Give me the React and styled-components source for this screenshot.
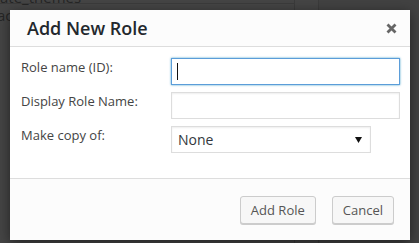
import React from 'react';
import styled, { createGlobalStyle } from 'styled-components';

const GlobalStyle = createGlobalStyle`
  html, body {
    margin: 0;
    padding: 0;
    background: #444;
  }
  * { box-sizing: border-box; }
`;

const Screen = styled.div`
  position: relative;
  width: 419px;
  height: 243px;
  overflow: hidden;
  background: #444;
  font-family: "Open Sans", "Noto Sans", sans-serif;
`;

// the admin table that sits behind the modal backdrop
const Underlay = styled.div`
  display: grid;
  grid-template-columns: 295px 24px 1fr;
  height: 100%;
`;

const UnderCol = styled.div`
  border-right: ${(p) => (p.$last ? 'none' : '1px solid #3b3b3b')};
  background: ${(p) => (p.$last ? '#424242' : '#454545')};
  overflow: hidden;
`;

const UnderRow = styled.div`
  height: ${(p) => p.$h}px;
  border-bottom: ${(p) => (p.$line ? '1px solid #3b3b3b' : 'none')};
  color: #262626;
  font-size: 15px;
  line-height: ${(p) => p.$h}px;
  white-space: nowrap;
  margin-left: ${(p) => p.$indent || 0}px;
`;

const Dialog = styled.div`
  position: absolute;
  top: 10px;
  left: 10px;
  width: 400px;
  height: 230px;
  display: flex;
  flex-direction: column;
  background: #fff;
  box-shadow: 0 3px 12px rgba(0, 0, 0, 0.5);
`;

const Header = styled.div`
  height: 37px;
  display: flex;
  align-items: center;
  justify-content: space-between;
  padding: 0 13px 0 17px;
  background: #fcfcfc;
  border-bottom: 1px solid #ddd;
`;

const Title = styled.h1`
  margin: 0;
  font-size: 18px;
  font-weight: 600;
  color: #23282d;
  line-height: 24px;
`;

const CloseButton = styled.button`
  border: 0;
  padding: 0;
  background: none;
  width: 11px;
  height: 11px;
  display: flex;
  cursor: pointer;
`;

const Body = styled.div`
  flex: 1;
  display: flex;
  flex-direction: column;
  gap: 7px;
  padding: 11px 10px 0 11px;
`;

const Row = styled.div`
  display: flex;
  align-items: flex-start;
`;

const Label = styled.label`
  width: 150px;
  flex-shrink: 0;
  font-size: 13px;
  line-height: 18px;
  color: #444;
`;

const InputWrap = styled.div`
  position: relative;
  display: flex;
`;

const TextInput = styled.input`
  width: 229px;
  height: 27px;
  margin: 0;
  padding: 0 6px;
  border: 1px solid ${(p) => (p.$focused ? '#5b9dd9' : '#ddd')};
  box-shadow: ${(p) =>
    p.$focused ? '0 0 2px rgba(30, 140, 190, 0.8)' : 'inset 0 1px 2px rgba(0, 0, 0, 0.07)'};
  background: #fff;
  font-family: inherit;
  font-size: 14px;
  color: #32373c;
  outline: none;
  caret-color: transparent;
`;

// text cursor shown in the focused field
const Caret = styled.span`
  position: absolute;
  left: 6px;
  top: 5px;
  width: 1px;
  height: 17px;
  background: #111;
  pointer-events: none;
`;

const SelectWrap = styled.div`
  position: relative;
  width: 200px;
  height: 27px;
`;

const Select = styled.select`
  appearance: none;
  width: 100%;
  height: 100%;
  margin: 0;
  padding: 0 20px 0 6px;
  border: 1px solid #ddd;
  border-radius: 0;
  box-shadow: inset 0 1px 2px rgba(0, 0, 0, 0.07);
  background: #fff;
  font-family: inherit;
  font-size: 14px;
  color: #32373c;
  outline: none;
`;

const Arrow = styled.svg`
  position: absolute;
  right: 9px;
  top: 11px;
  pointer-events: none;
`;

const Footer = styled.div`
  height: 62px;
  display: flex;
  align-items: flex-start;
  justify-content: flex-end;
  gap: 16px;
  padding: 17px 16px 0 0;
  background: #fcfcfc;
  border-top: 1px solid #ddd;
`;

const Button = styled.button`
  height: 28px;
  padding: 0 10px;
  border: 1px solid #ccc;
  border-radius: 3px;
  background: #f7f7f7;
  box-shadow: 0 1px 0 #ccc;
  font-family: inherit;
  font-size: 13px;
  color: #555;
  line-height: 26px;
  cursor: pointer;
`;

const fields = [
  { id: 'role-id', label: 'Role name (ID):', focused: true },
  { id: 'role-name', label: 'Display Role Name:' },
];

export default function App() {
  return (
    <Screen>
      <GlobalStyle />
      <Underlay>
        <UnderCol>
          <UnderRow $h={14} $line style={{ marginTop: -10 }}>
            ate_themes
          </UnderRow>
          <UnderRow $h={22} $indent={-3}>ac</UnderRow>
        </UnderCol>
        <UnderCol />
        <UnderCol $last />
      </Underlay>

      <Dialog role="dialog">
        <Header>
          <Title>Add New Role</Title>
          <CloseButton aria-label="Close">
            <svg width="11" height="11" viewBox="0 0 11 11">
              <path d="M1.5 1.5 L9.5 9.5 M9.5 1.5 L1.5 9.5" stroke="#666" strokeWidth="2.8" />
            </svg>
          </CloseButton>
        </Header>

        <Body>
          {fields.map((f) => (
            <Row key={f.id}>
              <Label htmlFor={f.id}>{f.label}</Label>
              <InputWrap>
                <TextInput id={f.id} type="text" $focused={f.focused} />
                {f.focused && <Caret />}
              </InputWrap>
            </Row>
          ))}
          <Row>
            <Label htmlFor="copy-of">Make copy of:</Label>
            <SelectWrap>
              <Select id="copy-of" defaultValue="none">
                <option value="none">None</option>
              </Select>
              <Arrow width="7" height="6" viewBox="0 0 7 6">
                <path d="M0 0 H7 L3.5 6 Z" fill="#111" />
              </Arrow>
            </SelectWrap>
          </Row>
        </Body>

        <Footer>
          <Button>Add Role</Button>
          <Button>Cancel</Button>
        </Footer>
      </Dialog>
    </Screen>
  );
}
